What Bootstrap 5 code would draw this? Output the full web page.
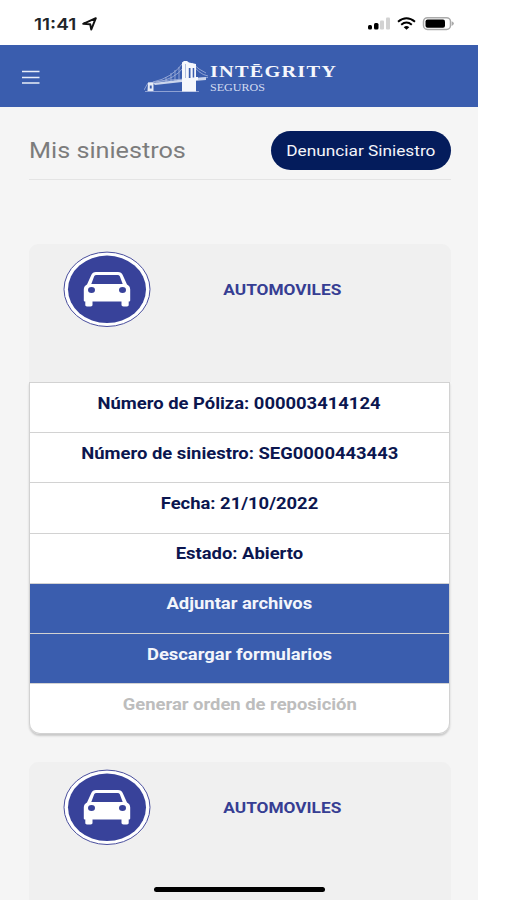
<!DOCTYPE html>
<html lang="es">
<head>
<meta charset="utf-8">
<meta name="viewport" content="width=device-width, initial-scale=1">
<title>Mis siniestros</title>
<link rel="stylesheet" href="https://cdn.jsdelivr.net/npm/bootstrap@5.3.0/dist/css/bootstrap.min.css">
<style>
  body { font-family: Roboto, "Liberation Sans", sans-serif; height: 900px; background: #fff; }
  .screen { width: 478px; height: 900px; background: #f5f5f5; }
  .statusbar { height: 45px; background: #fff; padding: 2px 24px 0 34px; }
  .clock { font-family: Inter, sans-serif; font-weight: 600; font-size: 16px; line-height: 1; }
  .topbar { height: 62px; background: #3a5dae; padding: 1px 22px 0; }
  .brand { margin-right: 117px; }
  .wide { display: inline-block; transform: scaleX(1.15); white-space: nowrap; }
  .wide-start { transform-origin: left center; }
  .clock.wide { transform: scaleX(1.19); }
  .page-title .wide { transform: scaleX(1.12); }
  .content-area { padding: 24px 27px 0 29px; }
  .title-row { height: 49px; border-bottom: 1.5px solid #e4e4e4; margin-bottom: 64px; }
  .page-title { font-size: 22.5px; line-height: 39px; color: #7c7c7c; }
  .btn-report { width: 180px; height: 39px; background: #041c5c; color: #f4f5fa; font-size: 15px; line-height: 40px; }
  .claim { margin-bottom: 28px; }
  .claim-head { height: 138px; background: #f0f0f0; border-radius: 9px 9px 0 0; padding: 7px 0 0 34px; }
  .claim-type { color: #363e93; font-size: 15px; line-height: 79px; width: 180px; margin-left: 41px; }
  .claim-list { --bs-list-group-border-color: #d2d2d2; --bs-list-group-border-radius: 11px; margin-right: 1px; border-radius: 0 0 11px 11px; box-shadow: 0 2px 2px #c9c9c9; }
  .claim-list .list-group-item { height: 50.2px; padding: 8.600px 0 7px; line-height: 24px; font-size: 16px; color: #0b164f; text-align: center; font-weight: 700; }
  .claim-list .list-group-item:first-child { border-radius: 0; height: 51.2px; }
  .claim-list .option-active { background: #3a5dae; color: #f3f5fb; }
  .claim-list .option-off { color: #bdbdbd; }
  .home-bar { left: 154px; top: 887px; width: 171px; height: 5px; background: #000; }
</style>
<script src="https://cdn.jsdelivr.net/npm/bootstrap@5.3.0/dist/js/bootstrap.bundle.min.js"></script>
</head>
<body class="overflow-hidden">
<svg width="0" height="0" class="position-absolute" aria-hidden="true">
  <symbol id="car" viewBox="0 0 88 76">
    <ellipse cx="44" cy="38.300" rx="43" ry="37.200" fill="#fff" stroke="#4a4f9e" stroke-width="1"/>
    <ellipse cx="44" cy="38.300" rx="39" ry="33.700" fill="#38429a"/>
    <g transform="translate(0 .6)">
    <path fill="#fff" d="M33 20.500h22q3.500 0 4.700 3l4.300 9.500q3.200 1.500 3.200 5v11q0 1-1 1h-.5v3.500q0 1.500-3.500 1.500t-3.700-1.500v-3.500h-29v3.500q0 1.500-3.700 1.500t-3.500-1.500v-3.500h-.5q-1 0-1-1v-11q0-3.500 3.200-5l4.300-9.500q1.200-3 4.700-3z"/>
    <path fill="#38429a" d="M33.500 23.300h21q1.700 0 2.300 1.400l2.900 7.800h-31.400l2.900-7.800q.6-1.400 2.300-1.400z"/>
    <ellipse cx="28.500" cy="38.500" rx="3.500" ry="3" fill="#38429a"/><ellipse cx="59.500" cy="38.500" rx="3.500" ry="3" fill="#38429a"/>
    </g>
  </symbol>
</svg>
<div class="screen position-relative overflow-hidden">
  <header class="statusbar d-flex align-items-center justify-content-between">
    <div class="d-flex align-items-center">
      <span class="clock wide wide-start">11:41</span>
      <svg class="ms-2 ps-1" width="19" height="14" viewBox="0 0 15 14"><path d="M1.200 6.800 13.800 1.200 9.300 12.500 8.200 7.200z" fill="none" stroke="#111" stroke-width="2" stroke-linejoin="round"/></svg>
    </div>
    <svg width="88" height="16" viewBox="0 0 88 16">
      <rect x="2" y="9" width="4" height="4.500" rx="1.500"/><rect x="8" y="7" width="4.500" height="6.500" rx="1.500"/>
      <rect x="14" y="4.500" width="4" height="9" rx="1" fill="#d2d2d2"/><rect x="20" y="1.500" width="4" height="12" rx="1" fill="#d2d2d2"/>
      <g fill="none" stroke="#000" stroke-width="2"><path d="M32 5.800q8.500-7 17 0"/><path d="M35.200 8.700q5.300-4.400 10.600 0"/></g><path d="M37.700 11.200q2.800-2.200 5.600 0l-2.800 2.500z"/>
      <rect x="57.500" y="1.700" width="27" height="11.800" rx="4" fill="#fff" stroke="#aaa" stroke-width="1.500"/><rect x="59.500" y="3.500" width="19.500" height="8.300" rx="2"/><path d="M85.700 5.300q2.200.8 2.200 2.300t-2.200 2.300z" fill="#aaa"/>
    </svg>
  </header>
  <nav class="topbar d-flex align-items-center">
    <svg width="18" height="14" viewBox="0 0 18 14"><path d="M0 1.500h17.500M0 7.500h17.500M0 13h17.500" stroke="#e8edf8" stroke-width="1.400"/></svg>
    <svg class="brand ms-auto" width="195" height="36" viewBox="0 0 195 36">
      <g fill="none" stroke="#a3b3dc" stroke-width=".8">
        <path d="M1 32.500h54M0 31 4 24 26 21 64 18.500M9 23Q28 19 39 4M12 23Q30 21 40 8M48 4Q54 15 64 17M48 4Q55 11 62 14M22 18v5M27 14v8M31 11v11M35 8v13"/>
      </g>
      <path d="M9 24 38 20.500 62 18v3L38 23 11 26z" fill="#cbd5ec"/>
      <path fill="#f5f7fc" d="M38 3.500 40 2h3l2 1.500 7 1.500v13h2v3h-2v11.500H38z"/>
      <path d="M44.800 9h1.700v10h-1.700zM48.700 9h1.500v9.500h-1.500z" fill="#3a5dae"/><path d="M41.500 5v14" stroke="#8fa3d3" stroke-width=".7"/>
      <path fill="#e6ebf6" d="M4 23.500h5.500V32H3.500z"/><path fill="#3a5dae" d="M5.800 26.500h1.900v3H5.800z"/>
      <text x="66" y="18" font-family="Liberation Serif, serif" font-weight="700" font-size="17.500" fill="#f5f7fc" textLength="127" lengthAdjust="spacingAndGlyphs" letter-spacing="1">INTĒGRITY</text>
      <text x="66" y="32" font-family="Liberation Serif, serif" font-size="10.800" fill="#d3dcf1" textLength="55" lengthAdjust="spacingAndGlyphs">SEGUROS</text>
    </svg>
  </nav>
  <main class="content-area">
    <div class="title-row d-flex justify-content-between align-items-start">
      <h1 class="page-title fw-normal m-0"><span class="wide wide-start">Mis siniestros</span></h1>
      <button type="button" class="btn btn-report rounded-pill border-0 p-0"><span class="wide">Denunciar Siniestro</span></button>
    </div>
    <section class="claim">
      <div class="claim-head d-flex align-items-start">
        <svg width="88" height="76"><use href="#car"/></svg>
        <div class="claim-type fw-bold text-center"><span class="wide">AUTOMOVILES</span></div>
      </div>
      <ul class="list-group claim-list">
        <li class="list-group-item"><span class="wide">Número de Póliza: 000003414124</span></li>
        <li class="list-group-item"><span class="wide">Número de siniestro: SEG0000443443</span></li>
        <li class="list-group-item"><span class="wide">Fecha: 21/10/2022</span></li>
        <li class="list-group-item"><span class="wide">Estado: Abierto</span></li>
        <li class="list-group-item option-active"><span class="wide">Adjuntar archivos</span></li>
        <li class="list-group-item option-active"><span class="wide">Descargar formularios</span></li>
        <li class="list-group-item option-off"><span class="wide">Generar orden de reposición</span></li>
      </ul>
    </section>
    <section class="claim">
      <div class="claim-head d-flex align-items-start">
        <svg width="88" height="76"><use href="#car"/></svg>
        <div class="claim-type fw-bold text-center"><span class="wide">AUTOMOVILES</span></div>
      </div>
    </section>
  </main>
  <div class="home-bar position-absolute rounded-pill"></div>
</div>
</body>
</html>
